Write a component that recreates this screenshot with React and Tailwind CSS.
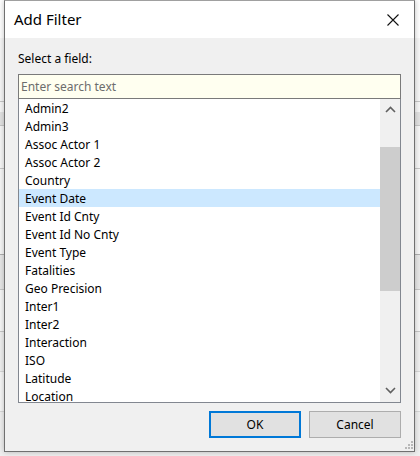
import React from "react";

const items = [
  "Admin2",
  "Admin3",
  "Assoc Actor 1",
  "Assoc Actor 2",
  "Country",
  "Event Date",
  "Event Id Cnty",
  "Event Id No Cnty",
  "Event Type",
  "Fatalities",
  "Geo Precision",
  "Inter1",
  "Inter2",
  "Interaction",
  "ISO",
  "Latitude",
  "Location",
];

const font = { fontFamily: '"Noto Sans", "Segoe UI", sans-serif' };

function Background() {
  return (
    <div className="flex flex-col w-full h-full bg-[#f7f7f7]">
      <div className="h-[38px] bg-white" />
      <div className="h-[64px] border-b border-[#c8c8c8] bg-[#f7f7f7]" />
      <div className="h-[10px] bg-[#f7f7f7]" />
      <div className="h-[14px] bg-[#e3e3e3] border-b border-[#c8c8c8]" />
      <div className="h-[43px] bg-[#f7f7f7] border-b border-[#c8c8c8]" />
      <div className="h-[86px] bg-[#f7f7f7] border-b border-[#b0b0b0]" />
      <div className="h-[35px] bg-[#e8e8e8] border-b border-[#c8c8c8]" />
      <div className="h-[42px] bg-[#f7f7f7] border-b border-[#c8c8c8]" />
      <div className="h-[40px] bg-[#f0f0f0] border-b border-[#d8d8d8]" />
      <div className="h-[40px] bg-[#f7f7f7] border-b border-[#d8d8d8]" />
      <div className="flex-1 bg-[#f0f0f0]" />
    </div>
  );
}

function Chevron({ up }) {
  return (
    <svg width="11" height="7" viewBox="0 0 11 7">
      <path
        d={up ? "M1 6 L5.5 1.5 L10 6" : "M1 1 L5.5 5.5 L10 1"}
        fill="none"
        stroke="#606060"
        strokeWidth="1.6"
      />
    </svg>
  );
}

export default function App() {
  return (
    <div className="relative w-[420px] h-[456px] overflow-hidden" style={font}>
      <Background />
      <div className="absolute left-[4px] top-0 w-[411px] h-[452px] border border-[#707070] border-t-[#a0a0a0] bg-[#f0f0f0] flex flex-col shadow-[0_0_6px_rgba(0,0,0,0.25)]">
        <div className="h-[37px] bg-white flex items-center justify-between pl-[9px] pr-[14px] shrink-0">
          <span className="text-[15px] text-black leading-none">Add Filter</span>
          <svg width="14" height="14" viewBox="0 0 14 14">
            <path d="M1.5 1.5 L12.5 12.5 M12.5 1.5 L1.5 12.5" stroke="#111" strokeWidth="1.1" fill="none" />
          </svg>
        </div>
        <div className="flex flex-col px-[13px] flex-1">
          <div className="mt-[13px] text-[12px] leading-[16px] text-black">Select a field:</div>
          <div className="mt-[7px] h-[25px] border border-[#7a7a7a] bg-[#fffff0] flex items-center pl-[2px] pt-[1px]">
            <span className="text-[12px] text-[#6d6d6d] leading-none">Enter search text</span>
          </div>
          <div className="h-[304px] border border-t-0 border-[#828790] bg-white flex overflow-hidden">
            <div className="flex-1 flex flex-col overflow-hidden">
              {items.map((it) => (
                <div
                  key={it}
                  className={
                    "h-[18px] shrink-0 flex items-center pl-[6px] pt-[1px] text-[12px] text-black leading-none " +
                    (it === "Event Date" ? "bg-[#cce8ff]" : "")
                  }
                >
                  {it}
                </div>
              ))}
            </div>
            <div className="w-[20px] bg-[#f0f0f0] flex flex-col items-center shrink-0">
              <div className="h-[17px] w-full flex items-center justify-center pt-[4px]">
                <Chevron up />
              </div>
              <div className="mt-[31px] h-[144px] w-full bg-[#cdcdcd]" />
              <div className="flex-1" />
              <div className="h-[17px] w-full flex items-center justify-center pb-[6px]">
                <Chevron />
              </div>
            </div>
          </div>
          <div className="mt-[8px] flex justify-end gap-[8px]">
            <div className="w-[92px] h-[27px] border-2 border-[#0078d7] bg-[#e1e1e1] flex items-center justify-center text-[12px] text-black">
              OK
            </div>
            <div className="w-[92px] h-[27px] border border-[#adadad] bg-[#e1e1e1] flex items-center justify-center text-[12px] text-black">
              Cancel
            </div>
          </div>
          <div className="flex-1 flex justify-end items-end pb-[1px] -mr-[12px]">
            <svg width="10" height="10" viewBox="0 0 10 10">
              {[
                [8, 0], [8, 3], [5, 3], [8, 6], [5, 6], [2, 6],
              ].map(([x, y], i) => (
                <rect key={i} x={x} y={y + 1} width="2" height="2" fill="#b8b8b8" />
              ))}
            </svg>
          </div>
        </div>
      </div>
    </div>
  );
}
